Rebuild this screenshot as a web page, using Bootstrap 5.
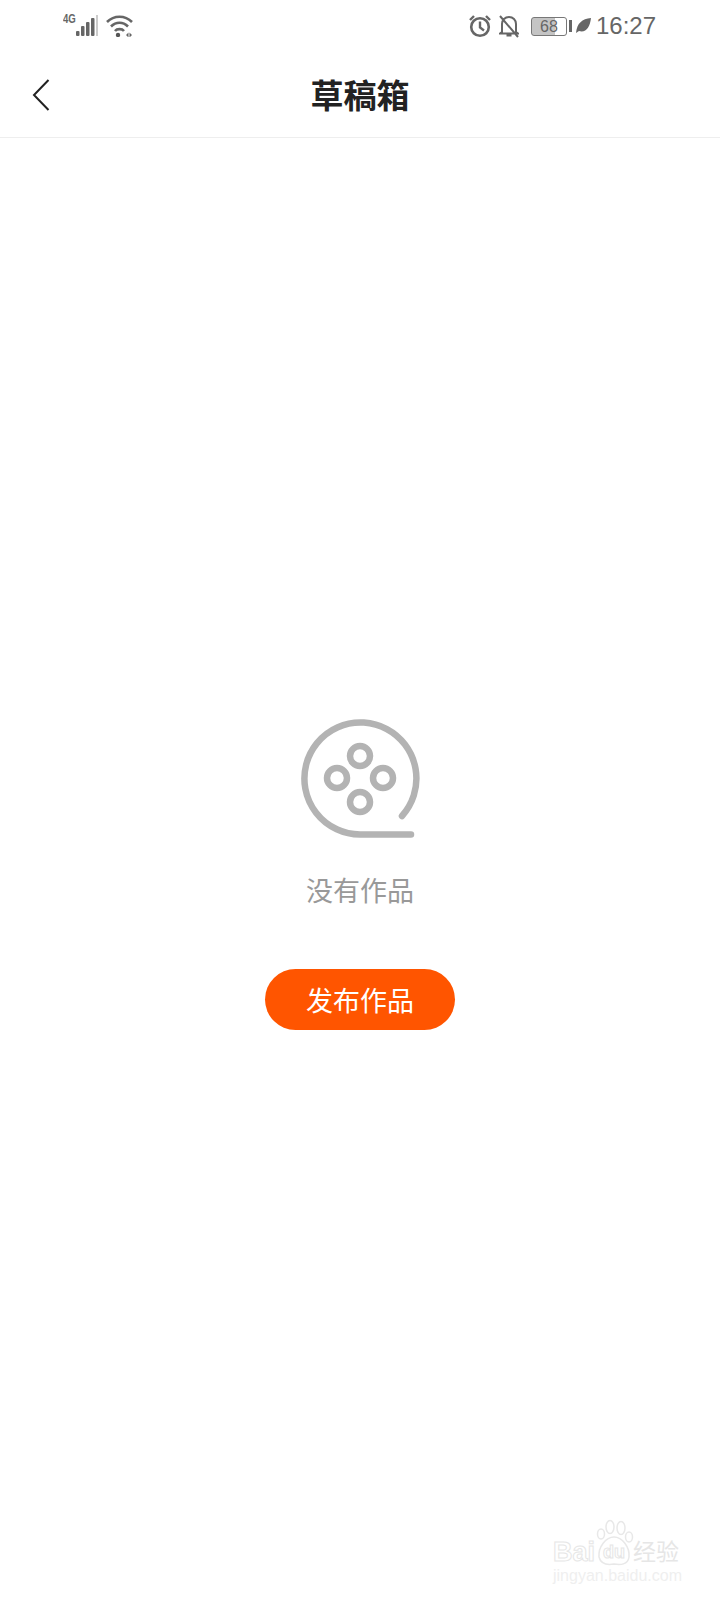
<!DOCTYPE html>
<html lang="zh-CN">
<head>
    <meta charset="UTF-8">
    <meta name="viewport" content="width=device-width, initial-scale=1.0">
    <title>草稿箱</title>
    <link href="https://cdn.jsdelivr.net/npm/bootstrap@5.3.0/dist/css/bootstrap.min.css" rel="stylesheet">
    <style>
        body {
            width: 720px;
            height: 1600px;
            overflow: hidden;
            background: #fff;
            font-family: "Liberation Sans", "Noto Sans CJK SC", sans-serif;
        }
        .status-bar {
            height: 52px;
            padding: 0 64px 0 63px;
            color: #666;
        }
        .net-tag {
            font-size: 12px;
            font-weight: 700;
            line-height: 1;
            margin-top: -14px;
            width: 13px;
            transform: scaleX(.8);
            transform-origin: left;
        }
        .clock-text {
            font-size: 24px;
            line-height: 1;
            margin-left: 5px;
        }
        .batt-box {
            width: 36px;
            height: 19px;
            margin-left: 12px;
            border: 1px solid #777;
            border-radius: 3px;
            font-size: 16px;
            line-height: 17px;
            text-align: center;
            background: linear-gradient(90deg, #c4c4c4 68%, #fff 68%);
        }
        .batt-tip {
            margin-left: 2px;
        }
        .title-bar {
            height: 86px;
            border-bottom: 1px solid #eee;
        }
        .back-btn {
            left: 32px;
            top: 27px;
        }
        .page-title {
            font-size: 33px;
            font-weight: 700;
            color: #222;
            line-height: 1;
            margin-top: 3px;
        }
        .empty-box {
            padding-top: 580px;
        }
        .empty-text {
            font-size: 27px;
            line-height: 1;
            color: #999;
            margin-top: 37px;
        }
        .publish-btn {
            width: 190px;
            height: 61px;
            margin-top: 63px;
            padding: 5px 0 0;
            border: 0;
            border-radius: 31px;
            background: #ff5500;
            color: #fff;
            font-size: 27px;
        }
        .mark-box {
            left: 553px;
            top: 1540px;
            width: 130px;
        }
        .mark-main {
            font-size: 27px;
            font-weight: 700;
            line-height: 24px;
            color: #fff;
            -webkit-text-stroke: 1px #e6e6e6;
        }
        .mark-du {
            font-size: 18px;
            font-weight: 700;
            line-height: 24px;
            margin-left: 8px;
            color: #fff;
            -webkit-text-stroke: 1px #e6e6e6;
        }
        .mark-paw {
            left: -7px;
            top: -21px;
        }
        .mark-cn {
            font-size: 23px;
            line-height: 24px;
            margin-left: 8px;
            color: #e6e6e6;
            white-space: nowrap;
        }
        .mark-url {
            font-size: 16px;
            line-height: 1;
            color: #efefef;
            margin-top: 4px;
            white-space: nowrap;
        }
    </style>
</head>
<body class="position-relative">
    <!-- status bar -->
    <div class="status-bar d-flex align-items-center">
        <span class="net-tag">4G</span>
        <svg width="22" height="22" viewBox="0 0 22 22" class="me-2">
            <rect x="0" y="16" width="3.500" height="5" rx="1" fill="#666"/>
            <rect x="5" y="11" width="3.500" height="10" rx="1" fill="#666"/>
            <rect x="10" y="7" width="3.500" height="14" rx="1" fill="#666"/>
            <rect x="15" y="3" width="3.500" height="18" rx="1" fill="#666"/>
            <rect x="20" y="0" width="2" height="21" fill="#ccc"/>
        </svg>
        <svg width="27" height="22" viewBox="0 0 27 22">
            <path d="M1 7C8 0 19 0 26 7M5 11.500C10 6.500 17 6.500 22 11.500M9 16C11 13.500 16 13.500 18 16" fill="none" stroke="#666" stroke-width="2.600"/>
            <circle cx="12" cy="20" r="2.200" fill="#555"/>
            <path d="M20 20l2.500-2.500v5zM26 20l-2.500-2.500v5z" fill="#666"/>
        </svg>
        <div class="ms-auto d-flex align-items-center">
            <svg width="22" height="24" viewBox="0 0 22 24">
                <circle cx="11" cy="13" r="8.800" fill="none" stroke="#666" stroke-width="2.600"/>
                <path d="M11 7.500v6l4 3M1 6l4-4M21 6l-4-4" fill="none" stroke="#666" stroke-width="2.400"/>
            </svg>
            <svg width="20" height="24" viewBox="0 0 20 24" class="ms-2">
                <path d="M3 18V10C3 6 6 3 10 3s7 3 7 7v8l2 1.500H1zM7.500 21.500h5M1 2l18 21" fill="none" stroke="#666" stroke-width="2"/>
            </svg>
            <div class="batt-box">68</div>
            <svg width="3" height="12" viewBox="0 0 3 12" class="batt-tip">
                <rect width="3" height="12" fill="#666"/>
            </svg>
            <svg width="15" height="16" viewBox="0 0 15 16" class="ms-1">
                <path d="M0 15C1 5 6 1 15 0C14 9 10 15 3 13z" fill="#666"/>
            </svg>
            <span class="clock-text">16:27</span>
        </div>
    </div>

    <!-- title bar -->
    <div class="title-bar position-relative d-flex align-items-center justify-content-center">
        <svg class="back-btn position-absolute" width="18" height="32" viewBox="0 0 18 32">
            <path d="M16.500 1L2 16l14.500 15" fill="none" stroke="#222" stroke-width="2"/>
        </svg>
        <div class="page-title">草稿箱</div>
    </div>

    <!-- empty state -->
    <div class="empty-box d-flex flex-column align-items-center">
        <svg width="124" height="124" viewBox="0 0 124 124">
            <path d="M104 98A56 56 0 1 0 62 116.500H113" fill="none" stroke="#b3b3b3" stroke-width="6.500" stroke-linecap="round"/>
            <circle cx="62" cy="38" r="10" fill="none" stroke="#b3b3b3" stroke-width="6.500"/>
            <circle cx="39" cy="60" r="10" fill="none" stroke="#b3b3b3" stroke-width="6.500"/>
            <circle cx="85" cy="60" r="10" fill="none" stroke="#b3b3b3" stroke-width="6.500"/>
            <circle cx="62" cy="84" r="10" fill="none" stroke="#b3b3b3" stroke-width="6.500"/>
        </svg>
        <div class="empty-text">没有作品</div>
        <button type="button" class="btn publish-btn">发布作品</button>
    </div>

    <!-- watermark -->
    <div class="mark-box position-absolute">
        <div class="d-flex align-items-end">
            <span class="mark-main">Bai</span>
            <span class="mark-du position-relative">du
                <svg width="38" height="48" viewBox="0 0 38 48" class="mark-paw position-absolute">
                    <g fill="none" stroke="#e8e8e8" stroke-width="1.500">
                        <ellipse cx="5" cy="15" rx="3.500" ry="5"/>
                        <ellipse cx="14" cy="8" rx="4" ry="6.500"/>
                        <ellipse cx="25" cy="9" rx="4" ry="6.500"/>
                        <ellipse cx="33" cy="18" rx="3.500" ry="5"/>
                        <path d="M18 18C26 18 34 28 33 38C32 46 24 46 18 45C12 46 5 46 3 38C2 28 10 18 18 18z"/>
                    </g>
                </svg>
            </span>
            <span class="mark-cn">经验</span>
        </div>
        <div class="mark-url">jingyan.baidu.com</div>
    </div>

    <script src="https://cdn.jsdelivr.net/npm/bootstrap@5.3.0/dist/js/bootstrap.bundle.min.js"></script>
</body>
</html>
